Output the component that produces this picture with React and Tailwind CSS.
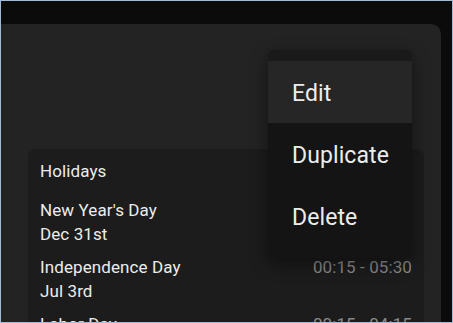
import React from 'react'

const rows = [
  { name: "New Year's Day", date: 'Dec 31st', time: '00:15 - 05:30' },
  { name: 'Independence Day', date: 'Jul 3rd', time: '00:15 - 05:30' },
  { name: 'Labor Day', date: 'Sep 1st', time: '00:15 - 04:15' },
]

export default function App() {
  return (
    <div className="relative w-[453px] h-[323px] overflow-hidden border border-[#a3bbd9] bg-[#0b0b0b] font-['Roboto',sans-serif] text-[#ececec]">
      <div className="h-full pt-[23px] pr-[11px]">
        {/* main panel */}
        <div className="h-full rounded-tr-[10px] bg-[#232323] pt-[125px] pl-[27px] pr-[17px]">
          <div className="h-[300px] rounded-lg bg-[#1c1c1c] pt-[10px] pl-3 pr-3">
            <div className="text-[17px] leading-6 tracking-[0.1px] mb-[11px]">Holidays</div>
            {rows.map((r) => (
              <div key={r.name} className="h-[57px] pt-[4px] flex justify-between text-[17px] leading-6 tracking-[0.1px]">
                <div>
                  <div>{r.name}</div>
                  <div>{r.date}</div>
                </div>
                <div className="text-[#8a8a8a]">{r.time}</div>
              </div>
            ))}
          </div>
        </div>
      </div>

      {/* context menu */}
      <div className="absolute left-[267px] top-[49px] w-[144px] rounded-t-[6px] rounded-b-[4px] overflow-hidden bg-[#141414] shadow-[0_6px_18px_rgba(0,0,0,0.45)]">
        <div className="h-[11px] bg-[#1a1a1a]" />
        <div className="h-[62px] flex items-center pl-6 pt-1 bg-[#262626] text-[23px] tracking-[0.1px]">Edit</div>
        <div className="h-[62px] flex items-center pl-6 pt-1 text-[23px] tracking-[0.1px]">Duplicate</div>
        <div className="h-[62px] flex items-center pl-6 pt-1 text-[23px] tracking-[0.1px]">Delete</div>
        <div className="h-[11px]" />
      </div>
    </div>
  )
}
